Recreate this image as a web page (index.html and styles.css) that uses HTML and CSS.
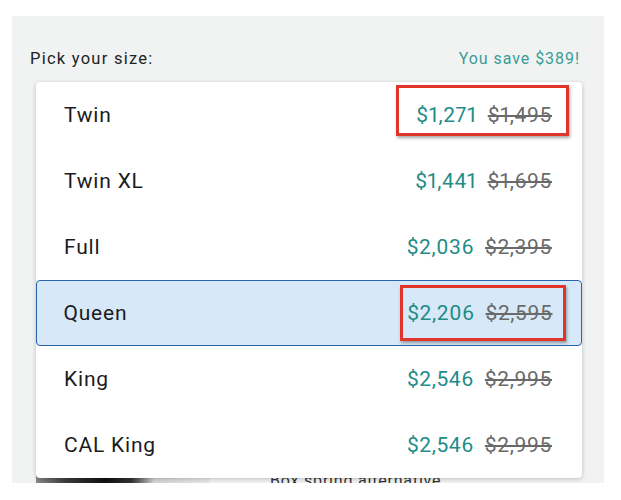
FILE: index.html
```html
<!DOCTYPE html>
<html lang="en">
<head>
<meta charset="utf-8">
<title>Pick your size</title>
<link rel="stylesheet" href="styles.css">
</head>
<body>
  <section class="panel">
    <header class="panel-head">
      <span class="label">Pick your size:</span>
      <span class="save">You save $389!</span>
    </header>
    <ul class="menu">
      <li class="row">
        <span class="name">Twin</span>
        <span class="prices"><span class="now">$1,271</span><s class="was">$1,495</s></span>
        <span class="mark mark-twin"></span>
      </li>
      <li class="row">
        <span class="name">Twin XL</span>
        <span class="prices"><span class="now">$1,441</span><s class="was">$1,695</s></span>
      </li>
      <li class="row">
        <span class="name">Full</span>
        <span class="prices"><span class="now">$2,036</span><s class="was">$2,395</s></span>
      </li>
      <li class="row selected">
        <span class="name">Queen</span>
        <span class="prices"><span class="now">$2,206</span><s class="was">$2,595</s></span>
        <span class="mark mark-queen"></span>
      </li>
      <li class="row">
        <span class="name">King</span>
        <span class="prices"><span class="now">$2,546</span><s class="was">$2,995</s></span>
      </li>
      <li class="row">
        <span class="name">CAL King</span>
        <span class="prices"><span class="now">$2,546</span><s class="was">$2,995</s></span>
      </li>
    </ul>
    <div class="below">
      <div class="thumb"></div>
      <span class="below-text">Box spring alternative</span>
    </div>
  </section>
</body>
</html>
```

FILE: styles.css
```css
html, body {
  margin: 0;
  padding: 0;
  background: #ffffff;
}

body {
  font-family: Roboto, "Liberation Sans", Arial, sans-serif;
  color: #1f1f1f;
}

.panel {
  margin: 16px 0 0 12px;
  width: 592px;
  height: 467px;
  background: #f1f3f3;
  box-sizing: border-box;
  padding-top: 30px;
  overflow: hidden;
}

.panel-head {
  display: flex;
  justify-content: space-between;
  align-items: center;
  height: 24px;
  padding: 0 24px 0 18px;
  margin-bottom: 12px;
}

.label {
  font-size: 16.5px;
  letter-spacing: 1.25px;
  color: #222;
}

.save {
  font-size: 16px;
  letter-spacing: 0.95px;
  color: #3a9c97;
}

.menu {
  list-style: none;
  margin: 0 0 0 24px;
  padding: 0;
  width: 546px;
  background: #fff;
  border-radius: 4px;
  box-shadow: 0 1px 4px rgba(0, 0, 0, 0.22);
  position: relative;
  z-index: 1;
}

.row {
  position: relative;
  display: flex;
  justify-content: space-between;
  align-items: center;
  height: 66px;
  padding: 0 30px 0 28px;
  box-sizing: border-box;
}

.row.selected {
  background: #d7e9f8;
  border: 1.5px solid #2b62ae;
  border-radius: 4px;
  padding: 0 28.5px 0 26.5px;
}

.name {
  font-size: 21px;
  letter-spacing: 0.8px;
  color: #1c1c1c;
}

.prices {
  display: flex;
  gap: 11px;
  font-size: 21px;
  letter-spacing: 0.6px;
  font-variant-numeric: proportional-nums;
}

.now {
  color: #1f8c87;
}

.was {
  color: #6a6a6a;
  text-decoration-thickness: 1.5px;
}

.mark {
  position: absolute;
  border: 3px solid #e2352a;
  box-shadow: 1px 2px 3px rgba(0, 0, 0, 0.35);
  box-sizing: border-box;
}

.mark-twin {
  top: 3px;
  right: 13px;
  width: 173px;
  height: 51px;
}

.mark-queen {
  top: 4px;
  right: 15px;
  width: 166px;
  height: 56px;
}

.below {
  display: flex;
  align-items: flex-start;
  gap: 60px;
  margin: -8px 0 0 24px;
  height: 13px;
  overflow: hidden;
}

.thumb {
  width: 174px;
  height: 13px;
  background: linear-gradient(90deg, #8a8a8a 0%, #3a3a3a 18%, #111 40%, #333 55%, #d4d4d4 68%, #e8e8e8 100%);
}

.below-text {
  font-size: 16px;
  letter-spacing: 0.8px;
  color: #333;
  line-height: 18px;
  margin-top: 2px;
}
```
